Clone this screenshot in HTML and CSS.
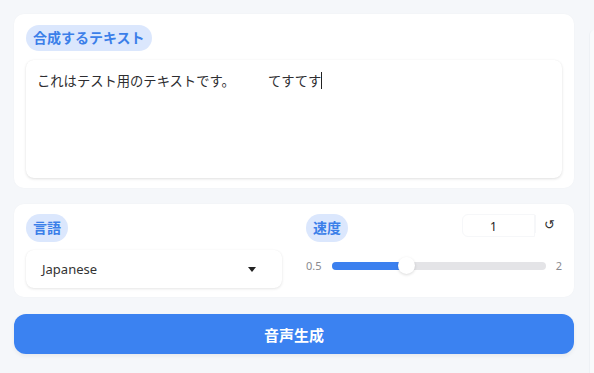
FILE: index.html
```html
<!DOCTYPE html>
<html lang="ja">
<head>
  <meta charset="UTF-8">
  <title>音声合成</title>
  <link rel="stylesheet" href="styles.css">
</head>
<body>
  <div class="main">
    <div class="card text-card">
      <span class="pill">合成するテキスト</span>
      <div class="textbox">これはテスト用のテキストです。　　　てすてす<span class="caret"></span></div>
    </div>

    <div class="card settings">
      <div class="col">
        <span class="pill">言語</span>
        <div class="select">
          <span>Japanese</span>
          <span class="arrow"></span>
        </div>
      </div>
      <div class="col">
        <div class="speed-head">
          <span class="pill">速度</span>
          <div class="number">
            <span class="num-value">1</span>
            <span class="reset">↺</span>
          </div>
        </div>
        <div class="slider-row">
          <span class="tick">0.5</span>
          <div class="track">
            <div class="fill" style="width: 35%"></div>
            <div class="thumb" style="left: 35%"></div>
          </div>
          <span class="tick">2</span>
        </div>
      </div>
    </div>

    <button class="generate">音声生成</button>
  </div>

  <div class="side-panel"></div>
</body>
</html>
```

FILE: styles.css
```css
html, body {
  margin: 0;
  padding: 0;
  height: 100%;
  overflow: hidden;
}

body {
  background-color: #f5f7fa;
  font-family: "Noto Sans", "Noto Sans CJK JP", sans-serif;
  color: #27272a;
  display: flex;
  gap: 15px;
  padding: 14px 0 0 14px;
  box-sizing: border-box;
}

.main {
  width: 560px;
  flex-shrink: 0;
  display: flex;
  flex-direction: column;
}

.side-panel {
  flex: 1;
  margin-top: 16px;
  background-color: #f9fafc;
  border-left: 1px solid #eef1f5;
  border-top-left-radius: 8px;
}

.card {
  background-color: #fff;
  border-radius: 10px;
  box-shadow: 0 0 2px rgba(0, 0, 0, 0.03);
}

.text-card {
  padding: 11px 12px 10px 12px;
  display: flex;
  flex-direction: column;
  align-items: flex-start;
}

.pill {
  display: inline-block;
  background-color: #dbe7fd;
  color: #3b7fe9;
  font-weight: bold;
  font-size: 14px;
  line-height: 26px;
  padding: 0 7px;
  border-radius: 13px;
}

.text-card .pill {
  margin-bottom: 9px;
}

.textbox {
  align-self: stretch;
  height: 118px;
  box-sizing: border-box;
  padding: 10px 11px;
  font-size: 13.3px;
  line-height: 22px;
  color: #2d2d30;
  white-space: pre;
  border-radius: 8px;
  box-shadow: 0 1px 3px rgba(0, 0, 0, 0.12), 0 0 1px rgba(0, 0, 0, 0.06);
}

.caret {
  display: inline-block;
  width: 1px;
  height: 17px;
  background-color: #222;
  vertical-align: -3px;
}

.settings {
  margin-top: 16px;
  padding: 10px 12px 9px 12px;
  display: grid;
  grid-template-columns: 1fr 1fr;
  gap: 24px;
}

.col {
  display: flex;
  flex-direction: column;
  align-items: flex-start;
}

.settings .pill {
  line-height: 28px;
  border-radius: 14px;
}

.select {
  align-self: stretch;
  margin-top: 8px;
  height: 38px;
  display: flex;
  align-items: center;
  justify-content: space-between;
  padding: 0 26px 0 16px;
  font-size: 13px;
  color: #333;
  border-radius: 8px;
  box-shadow: 0 1px 3px rgba(0, 0, 0, 0.1), 0 0 1px rgba(0, 0, 0, 0.06);
}

.arrow {
  width: 0;
  height: 0;
  border-left: 4.5px solid transparent;
  border-right: 4.5px solid transparent;
  border-top: 5px solid #222;
}

.speed-head {
  align-self: stretch;
  display: flex;
  justify-content: space-between;
  align-items: flex-start;
}

.number {
  display: flex;
  align-items: center;
  height: 23px;
  margin-right: -1px;
}

.num-value {
  width: 73px;
  height: 23px;
  line-height: 23px;
  padding-left: 27px;
  font-size: 12px;
  color: #222;
  border: 1px solid #f6f7f9;
  border-radius: 6px 0 0 6px;
  box-sizing: border-box;
}

.reset {
  width: 27px;
  text-align: center;
  font-size: 13px;
  color: #333;
  margin-top: -3px;
  border-left: 1px solid #f6f7f9;
}

.slider-row {
  align-self: stretch;
  display: flex;
  align-items: center;
  margin-top: 16px;
  gap: 10px;
}

.tick {
  font-size: 11px;
  color: #8a8a8f;
}

.track {
  flex: 1;
  position: relative;
  height: 8px;
  border-radius: 4px;
  background-color: #e4e4e7;
}

.fill {
  height: 100%;
  border-radius: 4px;
  background-color: #3b80ef;
}

.thumb {
  position: absolute;
  top: 50%;
  width: 17px;
  height: 17px;
  margin: -8.5px 0 0 -8.5px;
  border-radius: 50%;
  background-color: #fff;
  box-shadow: 0 1px 3px rgba(0, 0, 0, 0.15);
}

.generate {
  margin-top: 17px;
  height: 40px;
  border: none;
  border-radius: 12px;
  background-color: #3b82f1;
  color: #fff;
  font-family: "Noto Sans", "Noto Sans CJK JP", sans-serif;
  font-weight: bold;
  font-size: 15px;
  cursor: pointer;
  box-shadow: 0 2px 4px rgba(0, 0, 0, 0.06);
}
```
